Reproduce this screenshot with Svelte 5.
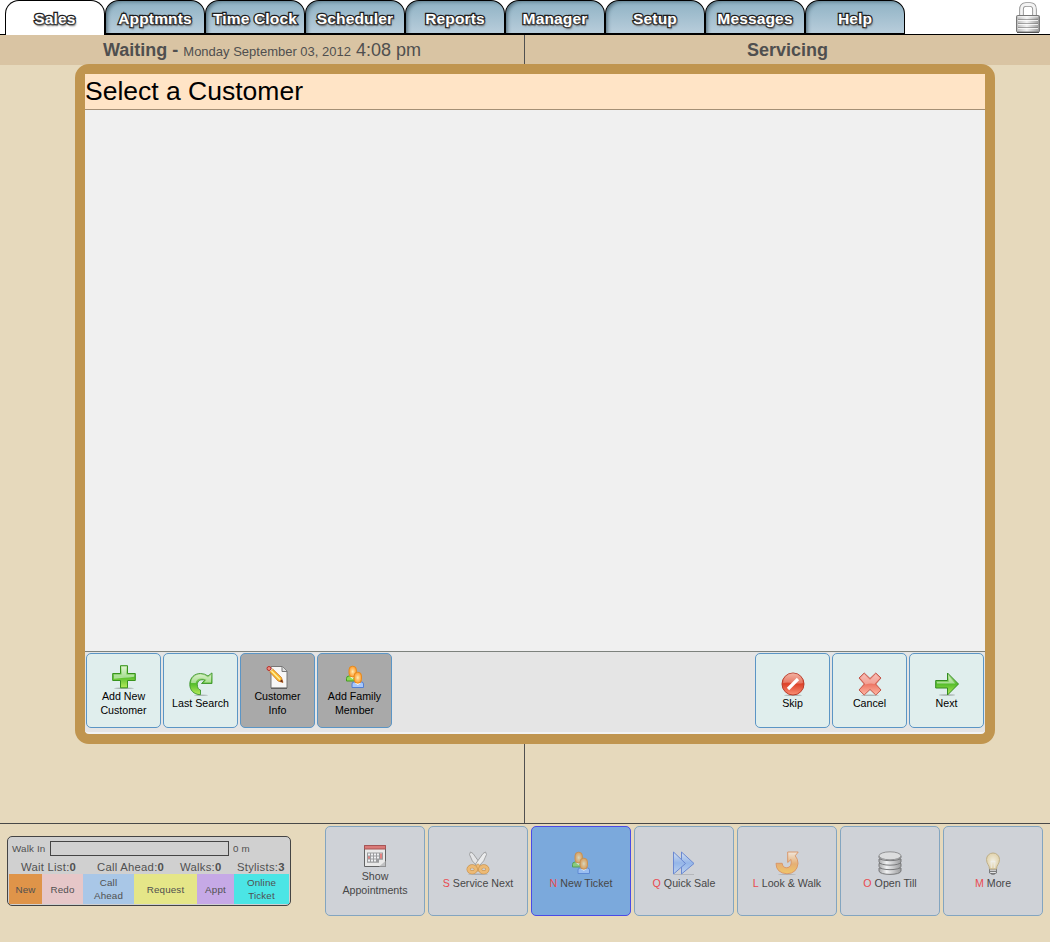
<script>
  const tabs = ['Sales', 'Apptmnts', 'Time Clock', 'Scheduler', 'Reports', 'Manager', 'Setup', 'Messages', 'Help'];
  const left = [
    { icon: 'plus', lines: ['Add New', 'Customer'] },
    { icon: 'redo', lines: ['Last Search'] },
    { icon: 'note', lines: ['Customer', 'Info'], off: true },
    { icon: 'people', lines: ['Add Family', 'Member'], off: true }
  ];
  const right = [
    { icon: 'skip', lines: ['Skip'] },
    { icon: 'cross', lines: ['Cancel'] },
    { icon: 'next', lines: ['Next'] }
  ];
  const actions = [
    { icon: 'calendar', lines: ['Show', 'Appointments'] },
    { icon: 'scissors', key: 'S', lines: ['Service Next'] },
    { icon: 'people', key: 'N', lines: ['New Ticket'], active: true },
    { icon: 'forward', key: 'Q', lines: ['Quick Sale'] },
    { icon: 'hook', key: 'L', lines: ['Look & Walk'] },
    { icon: 'till', key: 'O', lines: ['Open Till'] },
    { icon: 'bulb', key: 'M', lines: ['More'] }
  ];
  const legend = [
    { lines: ['New'], color: '#df9449', w: 33 },
    { lines: ['Redo'], color: '#e6c7c8', w: 41 },
    { lines: ['Call', 'Ahead'], color: '#a9c7e7', w: 51 },
    { lines: ['Request'], color: '#e5e688', w: 63 },
    { lines: ['Appt'], color: '#c6a9e6', w: 37 },
    { lines: ['Online', 'Ticket'], color: '#4be5e5', w: 55 }
  ];
</script>

{#snippet icon(name)}
  <svg class="icon" viewBox="0 0 24 24" width="24" height="24">
    {#if name === 'plus'}
      <ellipse cx="12" cy="23.2" rx="10" ry=".8" fill="#000" opacity=".25" />
      <path d="M8.5.7h7v7.8h7.8v7h-7.8v7.3h-7v-7.3H.7v-7h7.8z" fill="url(#green)" stroke="#37931c" />
      <path d="M9.6 1.8h4.8v7.8h7.8v2.200c-7 1.500-13 .8-20.400 2V9.600h7.800z" fill="#fff" opacity=".5" />
    {:else if name === 'redo'}
      <ellipse cx="12" cy="23.300" rx="7" ry=".7" fill="#000" opacity=".22" />
      <path d="M11.500 22.700C4.500 22.500.8 18 .8 12.500.8 5.500 5.500 1.600 11.500 1.500q4 0 7.500 2.500L23 .9v10.600H12.500l3.200-3.300C12 6.800 8.300 8.600 8.300 12.700c0 3 1.200 4.800 3.200 5.300z" fill="url(#green)" stroke="#3c942b" stroke-width=".9" />
      <path d="M2 11C2.500 5.500 6.500 2.600 11.500 2.600q4 0 7.500 2.900L22 3.200V10.500h-7l2.500-2.700C12 5 7 6.500 6.700 11z" fill="#fff" opacity=".45" />
    {:else if name === 'note'}
      <path d="M5 1.500h11.500L21 6v17H5z" fill="#f7f7f7" stroke="#777" />
      <path d="M5 23.300h16" stroke="#555" />
      <path d="M16 1.500V6.500h5" fill="#ddd" stroke="#777" />
      <path d="M3.500 6.800 6.500 3.800 15.500 12.500l1.500 5-5-1.500z" fill="#f9b92c" stroke="#c46a22" stroke-width=".7" />
      <path d="m5.500 6 8.500 8.500" stroke="#fff2a0" stroke-width="1.200" />
      <path d="m13.500 16.300 2.500-1.800 1 3z" fill="#702d1d" />
      <circle cx="3" cy="3.500" r="2" fill="#eb8c81" stroke="#b92d28" />
      <path d="m4 6.300 2.500-2.500" stroke="#eee" />
    {:else if name === 'people'}
      <path d="M3.500 16V13.500q0-2.500 2.500-2.500h5q2 0 2 2v3z" fill="#8fda55" stroke="#449a23" />
      <path d="M6.500 11.500h5l-2 2.500z" fill="#f7fff2" />
      <rect x="6" y="1.200" width="7.400" height="10.800" rx="3.600" fill="url(#orange)" stroke="#e48718" stroke-width=".9" />
      <path d="M9 22.500V19q0-2 2-2h7.500q2 0 2 2v3.500z" fill="#a8c8fb" stroke="#527ed2" />
      <path d="m12 18 2.800 2 2.800-2z" fill="#fff" />
      <rect x="11.100" y="7.200" width="7.400" height="11" rx="3.600" fill="url(#orange)" stroke="#e48718" stroke-width=".9" />
    {:else if name === 'skip'}
      <ellipse cx="12" cy="23.300" rx="9" ry=".7" opacity=".25" />
      <circle cx="12" cy="12" r="11" fill="url(#red)" stroke="#b93c2b" />
      <path d="M2 11a10 10 0 0 1 20 0C16 13 9 9 2 11z" fill="#fff" opacity=".25" />
      <path d="m7 17 10-10" stroke="#fff" stroke-width="3.200" />
    {:else if name === 'cross'}
      <ellipse cx="12" cy="23.300" rx="9" ry=".7" opacity=".23" />
      <path d="M6.200 1 12 6.500 17.800 1 23 6l-5.300 6 5.300 6-5.200 5L12 17.500 6.200 23 1 18l5.300-6L1 6z" fill="url(#pink)" stroke="#bd4a3c" stroke-width=".9" stroke-linejoin="round" />
      <path d="m2.500 6 3.700-3.500L12 8l5.800-5.500L21.500 6l-5 6q-4-1-9 .5z" fill="#fff" opacity=".3" />
    {:else if name === 'next'}
      <ellipse cx="12" cy="23" rx="8" ry="1" opacity=".2" />
      <path d="M.700 8.500h11.800V1l11 11-11 11v-7H.700z" fill="url(#green)" stroke="#328b20" />
      <path d="M2 9.800h11.700V4l6.500 7.500H2z" fill="#fff" opacity=".45" />
    {:else if name === 'calendar'}
      <path d="M1.500 1.500h21v21h-21z" fill="#f4f4f1" stroke="#333" />
      <path d="M1.500 1.500h21v3.500h-21z" fill="#df5550" stroke="#96201f" />
      <path d="M4 8.500h16v7.300h-4v3H4z" fill="#858585" />
      <path d="M5 9.500h2v2H5zm3 0h2v2H8zm3 0h2v2h-2zm3 0h2v2h-2zm3 0h2v2h-2zM8 12.500h2v2H8zm3 0h2v2h-2zm3 0h2v2h-2zm-9 3h2v2H5zm3 0h2v2H8zm3 0h2v2h-2z" fill="#fff" />
      <path d="M5 12.500h2v2H5zm12-3h2v5h-2z" fill="#ed625f" />
      <path d="M16 22.500 22.500 17v5.500z" fill="#bbb" />
    {:else if name === 'scissors'}
      <ellipse cx="12" cy="23.300" rx="10" ry=".7" opacity=".25" />
      <path d="M4.500 1 7 2.500l7.500 10.500-2.700 3Q5 10 3.500 3.500z" fill="#eee" stroke="#777" stroke-width=".8" />
      <path d="M19.500 1 17 2.500 9.500 13l2.700 3Q19 10 20.500 3.500z" fill="#f7f7f7" stroke="#777" stroke-width=".8" />
      <path d="m9.500 15 2.500-2.200 2.500 2.200-.5 4-2 1.500-2-1.500z" fill="#fbb14d" stroke="#c67b19" stroke-width=".7" />
      <ellipse cx="6.200" cy="18.300" rx="3.700" ry="3" fill="none" stroke="#c67b19" stroke-width="4" />
      <ellipse cx="17.800" cy="18.300" rx="3.700" ry="3" fill="none" stroke="#c67b19" stroke-width="4" />
      <ellipse cx="6.200" cy="18.300" rx="3.700" ry="3" fill="none" stroke="#fbb14d" stroke-width="2.700" />
      <ellipse cx="17.800" cy="18.300" rx="3.700" ry="3" fill="none" stroke="#fbb14d" stroke-width="2.700" />
    {:else if name === 'forward'}
      <path d="M2 23.500h20" stroke="#777" opacity=".4" />
      <path d="M9.500 1 22 12.500 9.500 23z" fill="url(#blue)" stroke="#426bd0" />
      <path d="M1.500 1 13.500 12.500 1.500 23z" fill="url(#blue)" stroke="#426bd0" />
    {:else if name === 'hook'}
      <ellipse cx="12" cy="23.400" rx="9" ry=".6" opacity=".2" />
      <path d="M1 12.300h6.200q.5 4.500 4.600 4.500 5.500-.5 4.200-8.300L12.700 11.500V1h10.500l-3 3.800q2.800 3.200 2.800 7.700Q22 22.300 12 22.800 1 22 1 12.300z" fill="url(#gold)" stroke="#df7932" stroke-width=".9" />
    {:else if name === 'till'}
      <path d="M1 17v3c0 4.500 22 4.500 22 0v-3z" fill="url(#silver)" stroke="#555" />
      <path d="M1 12.500v2.800c0 4.500 22 4.500 22 0v-2.800z" fill="url(#silver)" stroke="#555" />
      <path d="M1 8v2.800c0 4.500 22 4.500 22 0V8z" fill="url(#silver)" stroke="#555" />
      <path d="M1 5v1.300c0 4.500 22 4.500 22 0V5z" fill="url(#silver)" stroke="#555" />
      <ellipse cx="12" cy="4.800" rx="11" ry="4" fill="#e2e2e2" stroke="#777" />
    {:else if name === 'bulb'}
      <path d="M8.500 18h7v4q-3.500 2.500-7 0z" fill="#eee" stroke="#555" />
      <path d="M9 20.300h6M10 22.800h4" stroke="#333" />
      <path d="M8.500 18c0-4-3-5-3-9.500a6.500 6.500 0 0 1 13 0c0 4.500-3 5.500-3 9.500z" fill="url(#bulb)" stroke="#b8a269" />
      <path d="M10.500 17 10 10l2 1 2-1-.5 7" fill="none" stroke="#fff" opacity=".6" />
    {/if}
  </svg>
{/snippet}

<svg class="defs" width="0" height="0">
  <defs>
    <linearGradient id="green" x2="0" y2="1"><stop stop-color="#c4e8a9" /><stop offset=".5" stop-color="#55bd2b" /><stop offset="1" stop-color="#b6eb5b" /></linearGradient>
    <linearGradient id="red" x2="0" y2="1"><stop stop-color="#ef9a84" /><stop offset=".5" stop-color="#dd4229" /><stop offset="1" stop-color="#fa9076" /></linearGradient>
    <linearGradient id="pink" x2="0" y2="1"><stop stop-color="#f4aaa0" /><stop offset=".5" stop-color="#ed7563" /><stop offset="1" stop-color="#ffb7a4" /></linearGradient>
    <radialGradient id="orange"><stop stop-color="#fff0b5" /><stop offset=".4" stop-color="#ffc777" /><stop offset="1" stop-color="#ff9d2e" /></radialGradient>
    <linearGradient id="blue" x2="0" y2="1"><stop stop-color="#d5e5fb" /><stop offset=".5" stop-color="#7caaf0" /><stop offset="1" stop-color="#b5d3fc" /></linearGradient>
    <linearGradient id="gold" x2="0" y2="1"><stop stop-color="#fff0df" /><stop offset=".55" stop-color="#efa14b" /><stop offset="1" stop-color="#ffc23c" /></linearGradient>
    <linearGradient id="silver"><stop stop-color="#999" /><stop offset=".35" stop-color="#fff" /><stop offset="1" stop-color="#858585" /></linearGradient>
    <radialGradient id="bulb"><stop stop-color="#fffbe8" /><stop offset="1" stop-color="#ead49b" /></radialGradient>
    <linearGradient id="lock"><stop stop-color="#bbb" /><stop offset=".45" stop-color="#f2f2f2" /><stop offset="1" stop-color="#999" /></linearGradient>
  </defs>
</svg>

<div class="page">
  <header>
    <nav>
      {#each tabs as tab, i}
        <div class="tab" class:current={i === 0}><span>{tab}</span></div>
      {/each}
    </nav>
    <svg class="lock" width="26" height="32" viewBox="0 0 26 32">
      <path d="M6.500 13V7.500q0-5 4.500-5h4q4.500 0 4.500 5V13" fill="none" stroke="#8e8e8e" stroke-width="4.600" />
      <path d="M6.500 13V7.500q0-5 4.500-5h4q4.500 0 4.500 5V13" fill="none" stroke="#f3f3f3" stroke-width="2.800" />
      <rect x="1.500" y="13.500" width="23" height="16.500" rx="1" fill="url(#lock)" stroke="#777" />
      <path d="M3 14.800h20M3 18.500h20M3 22.500h20M3 26.500h20" stroke="#fff" opacity=".8" />
      <path d="M3 17.500h20M3 21.500h20M3 25.500h20" stroke="#777" opacity=".6" />
      <path d="M2 30.500h22" stroke="#555" />
    </svg>
  </header>

  <main>
    <section class="waiting"><h2><b>Waiting -&nbsp;</b><small>Monday September 03, 2012</small> 4:08 pm</h2></section>
    <section class="servicing"><h2><b>Servicing</b></h2></section>

    <div class="dialog">
      <h1>Select a Customer</h1>
      <div class="results"></div>
      <div class="toolbar">
        <div class="group">
          {#each left as b}
            <button class:off={b.off}>{@render icon(b.icon)}{#each b.lines as l}<span>{l}</span>{/each}</button>
          {/each}
        </div>
        <div class="group">
          {#each right as b}
            <button>{@render icon(b.icon)}{#each b.lines as l}<span>{l}</span>{/each}</button>
          {/each}
        </div>
      </div>
    </div>
  </main>

  <footer>
    <div class="status">
      <div class="walkin"><span>Walk In</span><div class="meter"></div><span>0 m</span></div>
      <div class="counts">
        <span>Wait List:<b>0</b></span><span>Call Ahead:<b>0</b></span><span>Walks:<b>0</b></span><span>Stylists:<b>3</b></span>
      </div>
      <div class="legend">
        {#each legend as c}
          <div style="width:{c.w}px;background:{c.color}">{#each c.lines as l}<span>{l}</span>{/each}</div>
        {/each}
      </div>
    </div>
    <div class="actions">
      {#each actions as a}
        <button class:active={a.active}>
          {@render icon(a.icon)}
          {#each a.lines as l}<span>{#if a.key}<i>{a.key}</i>&nbsp;{/if}{l}</span>{/each}
        </button>
      {/each}
    </div>
  </footer>
</div>

<style>
  :global(body) { margin: 0; background: #e6d9bc; }
  .page { width: 1050px; height: 942px; display: flex; flex-direction: column; overflow: hidden; background: #e6d9bc; font-family: "Liberation Sans", Arial, sans-serif; }
  .defs { position: absolute; }
  header { box-sizing: border-box; height: 35px; flex: none; display: flex; justify-content: space-between; padding: 0 9px 0 5px; background: #fff; border-bottom: 1px solid #000; }
  nav { display: flex; height: 35px; }
  .tab { box-sizing: border-box; width: 100px; height: 35px; border: 1px solid #000; border-bottom-width: 2px; border-radius: 14px 14px 0 0; background: linear-gradient(#8fb2c4, #b8cddb); box-shadow: inset 3px 2px 4px -2px #45606e; text-align: center; }
  .tab.current { background: #fff; box-shadow: none; border-bottom: 0; }
  .tab span { display: block; padding-top: 1px; font: bold 15.500px/34px "Liberation Sans", Arial, sans-serif; letter-spacing: .15px; white-space: nowrap; color: #fff; -webkit-text-stroke: 2.600px #1c1c1c; paint-order: stroke fill; text-shadow: 1px 2px 2px #666; }
  .lock { margin-top: 2px; }
  main { box-sizing: border-box; position: relative; height: 788px; flex: none; display: grid; grid-template-columns: 525px 525px; }
  section { box-sizing: border-box; }
  .waiting { border-right: 1px solid #505050; }
  h2 { margin: 0; height: 30px; background: #d9c4a3; color: #4f4f4f; font-size: 18px; line-height: 30px; font-weight: normal; text-align: center; white-space: nowrap; }
  h2 small { font-size: 13px; }
  .dialog { position: absolute; left: 75px; top: 29px; box-sizing: border-box; width: 920px; height: 680px; border: 10px solid #c0954f; border-radius: 14px; background: #f2f2f2; display: flex; flex-direction: column; }
  h1 { box-sizing: border-box; margin: 0; height: 36px; flex: none; background: #ffe4c6; border-bottom: 1px solid #a48f75; font-size: 26.500px; line-height: 34px; font-weight: normal; color: #000; }
  .results { height: 541px; flex: none; background: #f0f0f0; }
  .toolbar { box-sizing: border-box; height: 81px; flex: none; border-top: 1px solid #7d827d; padding: 1px; display: flex; justify-content: space-between; background: #e5e5e5; }
  .group { display: flex; gap: 2px; }
  button { box-sizing: border-box; width: 75px; height: 75px; margin: 0; padding: 0; border: 1px solid #5b95c5; border-radius: 5px; background: #e0eeed; display: flex; flex-direction: column; align-items: center; justify-content: center; font: 10.670px/14px "Liberation Sans", Arial, sans-serif; color: #000; }
  button.off { background: #a9a9a9; }
  button span { white-space: nowrap; }
  .icon { display: block; }
  footer { box-sizing: border-box; height: 119px; border-top: 1px solid #484848; padding: 2px 7px 0; display: flex; justify-content: space-between; align-items: flex-start; }
  .status { box-sizing: border-box; width: 284px; height: 70px; margin-top: 10px; border: 1px solid #444; border-radius: 5px; background: #d0d0d0; padding: 4px 1px 1px; color: #505050; font-size: 9.800px; letter-spacing: .15px; overflow: hidden; }
  .walkin { display: flex; align-items: center; height: 15px; gap: 4px; padding-left: 3px; }
  .walkin span:first-child { width: 34px; white-space: nowrap; }
  .meter { box-sizing: border-box; width: 179px; height: 15px; border: 1px solid #444; }
  .counts { display: grid; grid-template-columns: 76px 83px 57px 1fr; height: 18px; line-height: 23px; padding: 0 0 0 12px; font-size: 11.300px; letter-spacing: .25px; white-space: nowrap; }
  .legend { display: flex; height: 30px; }
  .legend div { display: flex; flex-direction: column; align-items: center; justify-content: center; line-height: 13px; }
  .actions { display: flex; gap: 3px; }
  .actions button { width: 100px; height: 90px; background: #cfd2d7; border-color: #83a5c0; color: #474747; }
  .actions button.active { background: #7ba9dc; border-color: #4b4be5; }
  .actions .icon { opacity: .7; margin-top: -1px; margin-bottom: 1px; }
  i { font-style: normal; color: #e94a50; }
</style>
